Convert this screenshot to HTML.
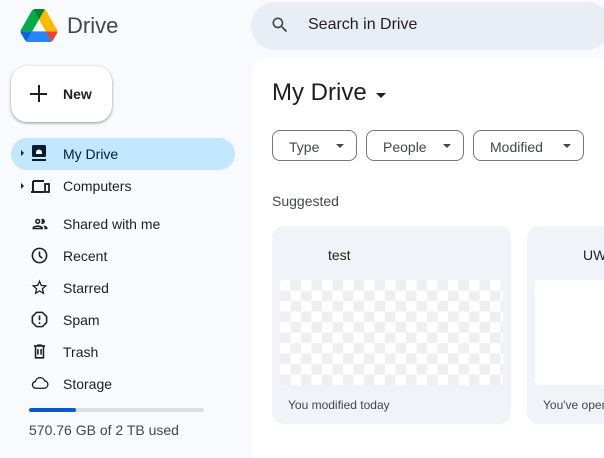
<!DOCTYPE html>
<html><head><meta charset="utf-8"><style>
*{margin:0;padding:0;box-sizing:border-box}
body{width:604px;height:437px;overflow:hidden;background:#f8fafd;font-family:"Liberation Sans",Arial,sans-serif;color:#1f1f1f;position:relative}
.abs{position:absolute}
.nav{position:absolute;left:63px;font-size:14px;color:#1f1f1f}
.ic{position:absolute;left:30px}
.chip{position:absolute;top:130px;height:31px;border:1px solid #747775;border-radius:8px;font-size:14px;color:#444746;padding:8px 0 0 16px}
.chip:after{content:"";position:absolute;right:12px;top:13px;border:4.5px solid transparent;border-top:4.5px solid #444746;border-bottom:0}
.card{position:absolute;top:226px;height:198px;background:#f0f4f9;border-radius:12px}
</style></head><body>
<svg class="abs" style="left:20px;top:9px" width="38" height="33" viewBox="0 0 87.3 78"><path d="m6.6 66.85 3.85 6.65c.8 1.4 1.95 2.5 3.3 3.3l13.75-23.8h-27.5c0 1.55.4 3.1 1.2 4.5z" fill="#0066da"/><path d="m43.65 25-13.75-23.8c-1.35.8-2.5 1.9-3.3 3.3l-25.4 44a9.06 9.06 0 0 0 -1.2 4.5h27.5z" fill="#00ac47"/><path d="m73.55 76.8c1.35-.8 2.5-1.9 3.3-3.3l1.6-2.75 7.65-13.25c.8-1.4 1.2-2.95 1.2-4.5h-27.502l5.852 11.5z" fill="#ea4335"/><path d="m43.65 25 13.75-23.8c-1.35-.8-2.9-1.2-4.5-1.2h-18.5c-1.6 0-3.15.45-4.5 1.2z" fill="#00832d"/><path d="m59.8 53h-32.3l-13.75 23.8c1.35.8 2.9 1.2 4.5 1.2h50.8c1.6 0 3.15-.45 4.5-1.2z" fill="#2684fc"/><path d="m73.4 26.5-12.7-22c-.8-1.4-1.95-2.5-3.3-3.3l-13.75 23.8 16.15 28h27.45c0-1.55-.4-3.1-1.2-4.5z" fill="#ffba00"/></svg>
<div class="abs" style="left:67px;top:13px;font-size:22px;color:#444746">Drive</div>
<div class="abs" style="left:251px;top:2px;width:360px;height:48px;background:#e9eef6;border-radius:24px"></div>
<svg class="abs" style="left:270px;top:15px" width="20" height="20" viewBox="0 0 24 24"><path d="M15.5 14h-.79l-.28-.27A6.47 6.47 0 0 0 16 9.5 6.5 6.5 0 1 0 9.5 16c1.61 0 3.09-.59 4.23-1.57l.27.28v.79l5 4.99L20.49 19zm-6 0C7.01 14 5 11.99 5 9.5S7.01 5 9.5 5 14 7.01 14 9.5 11.99 14 9.5 14" fill="#444746"/></svg>
<div class="abs" style="left:308px;top:16px;font-size:16px;color:#1f1f1f">Search in Drive</div>
<div class="abs" style="left:11px;top:66px;width:101px;height:56px;background:#fff;border-radius:16px;box-shadow:0 1px 3px rgba(0,0,0,.3),0 1px 2px rgba(0,0,0,.15)"></div>
<div class="abs" style="left:30px;top:84px;width:17px;height:2px;background:#1f1f1f;top:93px"></div>
<div class="abs" style="left:38px;top:85px;width:2px;height:17px;background:#1f1f1f"></div>
<div class="abs" style="left:63px;top:86px;font-size:14px;font-weight:bold;color:#1f1f1f">New</div>
<div class="abs" style="left:11px;top:138px;width:224px;height:32px;background:#c2e7ff;border-radius:16px"></div>
<div class="abs" style="left:21px;top:150px;border:3px solid transparent;border-left:3px solid #1f1f1f;border-right:0"></div>
<div class="abs" style="left:21px;top:183px;border:3px solid transparent;border-left:3px solid #1f1f1f;border-right:0"></div>
<svg class="ic" style="top:144px" width="18" height="18" viewBox="0 0 18 18"><rect x="2" y="1" width="14" height="12" rx="1.5" fill="#001d35"/><rect x="2" y="15" width="14" height="2" fill="#001d35"/><path d="M6 10h6v-1.5a3 3 0 0 0-6 0z" fill="#fff"/></svg>
<div class="nav" style="top:146px;color:#001d35">My Drive</div>
<svg class="ic" style="top:177px" width="20" height="18" viewBox="0 0 20 18"><path d="M3 4h11M3 4v10M1 15h13" stroke="#1f1f1f" stroke-width="2" fill="none"/><rect x="15" y="7" width="4" height="8" stroke="#1f1f1f" stroke-width="1.8" fill="none"/></svg>
<div class="nav" style="top:178px">Computers</div>
<svg class="ic" style="top:215px" width="20" height="18" viewBox="0 0 24 24"><path d="M9 13.75c-2.34 0-7 1.17-7 3.5V19h14v-1.75c0-2.33-4.66-3.5-7-3.5M4.34 17c.84-.58 2.87-1.25 4.66-1.25s3.82.67 4.66 1.25zM9 12c1.93 0 3.5-1.57 3.5-3.5S10.93 5 9 5 5.5 6.57 5.5 8.5 7.07 12 9 12m0-5c.83 0 1.5.67 1.5 1.5S9.83 10 9 10s-1.5-.67-1.5-1.5S8.17 7 9 7m7.04 6.81c1.16.84 1.96 1.96 1.96 3.44V19h4v-1.75c0-2.02-3.5-3.17-5.96-3.44M15 12c1.93 0 3.5-1.57 3.5-3.5S16.93 5 15 5c-.54 0-1.04.13-1.5.35.63.89 1 1.98 1 3.15s-.37 2.26-1 3.15c.46.22.96.35 1.5.35" fill="#1f1f1f"/></svg>
<div class="nav" style="top:216px">Shared with me</div>
<svg class="ic" style="top:246px" width="19" height="19" viewBox="0 0 24 24"><circle cx="12" cy="12" r="9" stroke="#1f1f1f" stroke-width="2" fill="none"/><path d="M12 7v5.5l3.5 3" stroke="#1f1f1f" stroke-width="2" fill="none"/></svg>
<div class="nav" style="top:248px">Recent</div>
<svg class="ic" style="top:278px" width="19" height="19" viewBox="0 0 24 24"><path d="m22 9.24-7.19-.62L12 2 9.19 8.63 2 9.24l5.46 4.73L5.82 21 12 17.27 18.18 21l-1.63-7.03zM12 15.4l-3.76 2.27 1-4.28-3.32-2.88 4.38-.38L12 6.1l1.71 4.04 4.38.38-3.32 2.88 1 4.28z" fill="#1f1f1f"/></svg>
<div class="nav" style="top:280px">Starred</div>
<svg class="ic" style="top:310px" width="19" height="19" viewBox="0 0 24 24"><path d="M8.3 3h7.4L21 8.3v7.4L15.7 21H8.3L3 15.7V8.3z" stroke="#1f1f1f" stroke-width="2" fill="none" stroke-linejoin="round"/><path d="M12 7v6" stroke="#1f1f1f" stroke-width="2"/><circle cx="12" cy="16.5" r="1.2" fill="#1f1f1f"/></svg>
<div class="nav" style="top:312px">Spam</div>
<svg class="ic" style="top:342px" width="19" height="19" viewBox="0 0 24 24"><path d="M5 5h14M9 4h6M7 5v15h10V5M10 9v7M14 9v7" stroke="#1f1f1f" stroke-width="2" fill="none"/></svg>
<div class="nav" style="top:344px">Trash</div>
<svg class="ic" style="top:374px" width="20" height="18" viewBox="0 0 24 24"><path d="M6.5 19a4.5 4.5 0 0 1-.6-8.96A6.5 6.5 0 0 1 18.3 9.1 5 5 0 0 1 18 19z" stroke="#1f1f1f" stroke-width="1.8" fill="none"/></svg>
<div class="nav" style="top:376px">Storage</div>
<div class="abs" style="left:29px;top:408px;width:175px;height:4px;background:#dcdcdc;border-radius:2px"></div>
<div class="abs" style="left:29px;top:408px;width:47px;height:4px;background:#0b57d0;border-radius:2px"></div>
<div class="abs" style="left:29px;top:422px;font-size:14px;color:#444746">570.76 GB of 2 TB used</div>
<div class="abs" style="left:252px;top:58px;width:400px;height:400px;background:#fff;border-radius:16px 0 0 0"></div>
<div class="abs" style="left:272px;top:79px;font-size:24px;color:#1f1f1f">My Drive</div>
<div class="abs" style="left:376px;top:93px;border:5px solid transparent;border-top:5px solid #1f1f1f;border-bottom:0"></div>
<div class="chip" style="left:272px;width:85px">Type</div>
<div class="chip" style="left:366px;width:98px">People</div>
<div class="chip" style="left:473px;width:111px">Modified</div>
<div class="abs" style="left:272px;top:193px;font-size:14px;color:#444746">Suggested</div>
<div class="card" style="left:272px;width:239px"></div>
<div class="abs" style="left:328px;top:247px;font-size:14px;color:#1f1f1f">test</div>
<div class="abs" style="left:280px;top:280px;width:223px;height:105px;border-radius:4px;background-color:#fff;background-image:conic-gradient(#efefef 25%,#fff 25% 50%,#efefef 50% 75%,#fff 75%);background-size:21px 21px"></div>
<div class="abs" style="left:288px;top:398px;font-size:12px;color:#444746">You modified today</div>
<div class="card" style="left:527px;width:100px"></div>
<div class="abs" style="left:583px;top:247px;font-size:14px;color:#1f1f1f">UW</div>
<div class="abs" style="left:535px;top:280px;width:80px;height:105px;background:#fff;border-radius:4px"></div>
<div class="abs" style="left:543px;top:398px;font-size:12px;color:#444746;white-space:nowrap">You've opened</div>
</body></html>
